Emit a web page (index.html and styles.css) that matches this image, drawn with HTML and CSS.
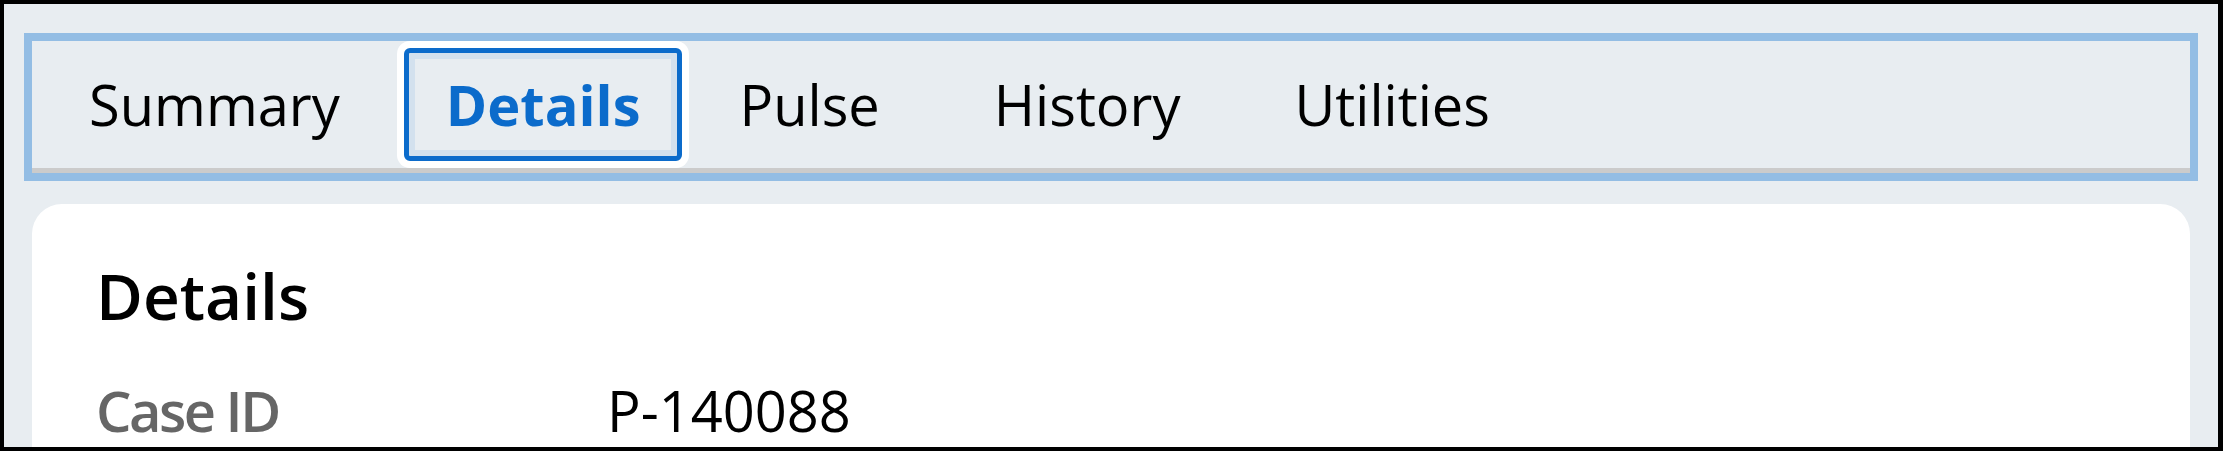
FILE: index.html
```html
<!DOCTYPE html>
<html lang="en">
<head>
<meta charset="utf-8">
<title>Details</title>
<link rel="stylesheet" href="styles.css">
</head>
<body>
<div class="frame">
  <div class="tablist" role="tablist">
    <div class="tab" role="tab">Summary</div>
    <div class="tab tab-active" role="tab" aria-selected="true">Details</div>
    <div class="tab" role="tab">Pulse</div>
    <div class="tab" role="tab">History</div>
    <div class="tab" role="tab">Utilities</div>
  </div>
  <section class="card">
    <h2 class="card-title">Details</h2>
    <div class="field">
      <div class="field-label">Case ID</div>
      <div class="field-value">P-140088</div>
    </div>
  </section>
</div>
</body>
</html>
```

FILE: styles.css
```css
* { box-sizing: border-box; }

html, body {
  margin: 0;
  padding: 0;
  background: #000;
}

body {
  font-family: "Open Sans", "Noto Sans", sans-serif;
  color: #000;
}

.frame {
  width: 2223px;
  height: 451px;
  border: 4px solid #000;
  border-right-width: 5px;
  background: #e8edf1;
  padding: 37px 28px 0 28px;
  overflow: hidden;
}

.tablist {
  display: flex;
  align-items: stretch;
  height: 132px;
  border-bottom: 5px solid #cbcbcb;
  outline: 8px solid #93bde4;
  background: #e8edf1;
}

.tab {
  display: flex;
  align-items: center;
  margin: 7px;
  padding: 0 50px;
  font-size: 56px;
  line-height: 1.362;
  color: #000;
  border-radius: 6px;
}

.tab-active {
  margin-right: 0;
  padding: 0 37px;
  border: 5px solid #0b6bcb;
  font-weight: 700;
  color: #0b6bcb;
  background: #e8edf1;
  box-shadow: inset 0 0 0 6px #d3e1ee, 0 0 0 7px #ffffff;
}

.card {
  margin-top: 31px;
  background: #fff;
  border-radius: 30px 30px 0 0;
  padding: 48px 64px 0 64px;
  height: 300px;
}

.card-title {
  margin: 0;
  font-size: 64px;
  font-weight: 600;
  line-height: 1.362;
}

.field {
  display: grid;
  grid-template-columns: 511px 1fr;
  margin-top: 33px;
  font-size: 56px;
  line-height: 1.362;
}

.field-label {
  font-weight: 600;
  letter-spacing: -2.5px;
  color: #666;
}

.field-value {
  color: #000;
}
```
